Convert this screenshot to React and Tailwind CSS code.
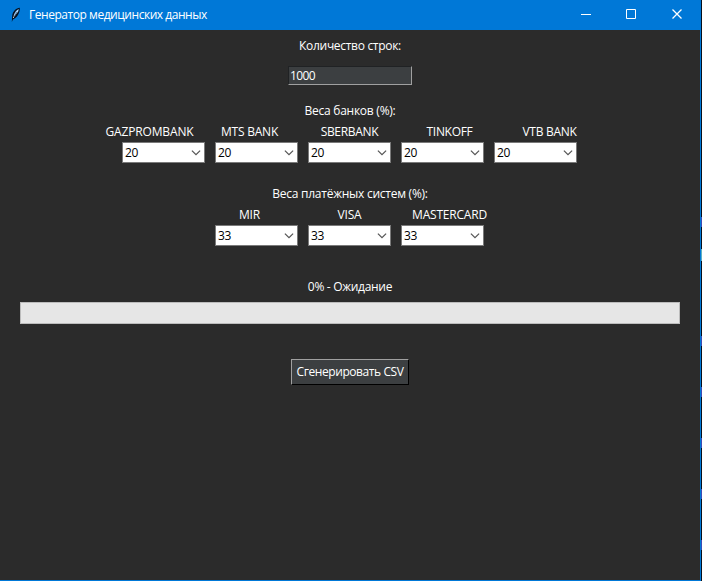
const banks = [
  { name: "GAZPROMBANK", value: "20", fit: "tracking-[-0.15px]" },
  { name: "MTS BANK", value: "20", fit: "tracking-[-0.2px]" },
  { name: "SBERBANK", value: "20", fit: "tracking-[-0.3px]" },
  { name: "TINKOFF", value: "20", fit: "tracking-[-0.3px]" },
  { name: "VTB BANK", value: "20", fit: "tracking-[-0.3px]" },
];

const systems = [
  { name: "MIR", value: "33", fit: "tracking-[-0.2px]" },
  { name: "VISA", value: "33", fit: "tracking-[-0.2px]" },
  { name: "MASTERCARD", value: "33", fit: "tracking-[-0.2px]" },
];

function Caption({ children, className = "" }) {
  return <div className={`h-[21px] text-center leading-[21px] whitespace-nowrap ${className}`}>{children}</div>;
}

function Combo({ value }) {
  return (
    <div className="flex h-[21px] w-[83px] items-center justify-between border border-[#7a7a7a] bg-white pr-[3px] pl-0.5 text-black">
      <span className="leading-[19px] tracking-[-0.3px]">{value}</span>
      <svg width="10" height="6" viewBox="0 0 10 6" fill="none" stroke="#555" strokeWidth="1.2">
        <path d="M.9.6 5 4.7 9.1.6" />
      </svg>
    </div>
  );
}

function Weights({ items }) {
  return (
    <>
      <div className="flex justify-center pr-px">
        {items.map((i) => (
          <Caption key={i.name} className={`w-[100px] ${i.fit}`}>{i.name}</Caption>
        ))}
      </div>
      <div className="flex justify-center gap-[10px] pr-px">
        {items.map((i) => (
          <Combo key={i.name} value={i.value} />
        ))}
      </div>
    </>
  );
}

function Feather() {
  return (
    <svg width="12" height="16" viewBox="0 0 12 16">
      <path d="M10.8.8C7 1.2 3.6 4.5 3.2 9L2.8 15l1.1-2.4C7.8 11 11.2 6 10.8.8Z" fill="#06101e" />
      <path d="M9.9 1.9C7.4 2.8 5 5.6 4.4 9.6l1.5-.8L9 5Z" fill="#80bdf2" />
      <path d="M8.8 3.2 4.2 11" stroke="#e4f3ff" strokeWidth=".8" />
      <path d="M8 5 5 10" stroke="#06101e" strokeWidth=".5" />
    </svg>
  );
}

// Sliver of the desktop that shows beside the window's right edge.
function DesktopEdge() {
  return (
    <svg width="1" height="581" viewBox="0 0 1 581">
      <rect y="0" width="1" height="581" fill="#07101c" />
      {[217, 336, 387, 438, 489, 540].map((y) => (
        <rect key={y} y={y} width="1" height="10" fill="#3b4bb4" />
      ))}
      <rect y="249" width="1" height="12" fill="#5fb0c0" />
    </svg>
  );
}

export default function App() {
  return (
    <div className="flex h-[581px] w-[702px] bg-[#07101c] font-['Open_Sans','Noto_Sans',sans-serif] text-[12px] text-white">
      <div className="flex w-[701px] flex-col border-r border-b border-[#0078d7] bg-[#2b2b2b]">
        <header className="-mr-px flex h-[30px] shrink-0 items-center bg-[#0078d7] pl-[9px]">
          <Feather />
          <span className="ml-2 tracking-[-0.46px] whitespace-nowrap">Генератор медицинских данных</span>
          <svg className="ml-auto" width="138" height="30" viewBox="0 0 138 30" fill="none" stroke="#fff">
            <path d="M18 14.5h10M63.5 9.5h9v9h-9z" />
            <path d="M109.5 9.5l9 9M118.5 9.5l-9 9" strokeWidth="1.3" />
          </svg>
        </header>
        <main className="flex flex-col">
          <Caption className="mt-[5px] tracking-[-0.3px]">Количество строк:</Caption>
          <div className="mt-[10px] ml-[288px] h-[19px] w-[124px] border border-t-[#202224] border-r-[#a0a0a0] border-b-[#a0a0a0] border-l-[#202224] bg-[#3c3f41] pl-px leading-[18px] tracking-[-0.6px]">
            1000
          </div>
          <Caption className="mt-[15px] tracking-[-0.25px]">Веса банков (%):</Caption>
          <Weights items={banks} />
          <Caption className="mt-[20px] tracking-[-0.25px]">Веса платёжных систем (%):</Caption>
          <Weights items={systems} />
          <Caption className="mt-[30px] tracking-[-0.3px]">0% - Ожидание</Caption>
          <div className="mx-5 mt-[5px] h-[22px] border border-[#bcbcbc] bg-[#e6e6e6]" />
          <button className="mx-auto mt-[35px] h-[26px] w-[118px] border border-t-[#a0a0a0] border-r-black border-b-black border-l-[#a0a0a0] bg-[#3c3f41] leading-[24px] tracking-[-0.42px] whitespace-nowrap">
            Сгенерировать CSV
          </button>
        </main>
      </div>
      <DesktopEdge />
    </div>
  );
}
